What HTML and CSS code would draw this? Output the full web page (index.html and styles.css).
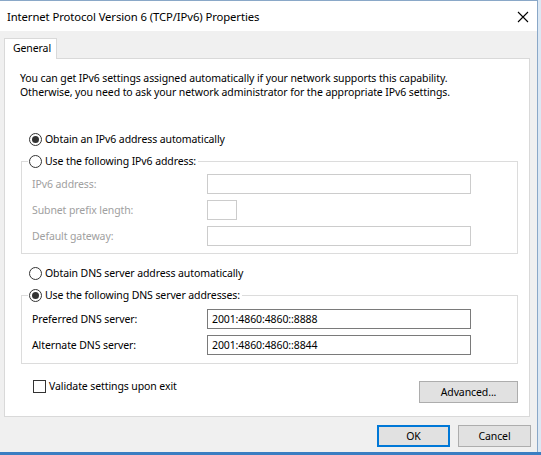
FILE: index.html
```html
<!DOCTYPE html>
<html>
<head>
<meta charset="utf-8">
<link rel="stylesheet" href="styles.css">
</head>
<body>
<div class="window">
  <div class="titlebar">
    <span class="title">Internet Protocol Version 6 (TCP/IPv6) Properties</span>
    <svg class="close" width="12" height="12" viewBox="0 0 12 12"><path d="M1 1 L11 11 M11 1 L1 11" stroke="#000" stroke-width="1.1" fill="none"/></svg>
  </div>
  <div class="client">
    <div class="tabs"><div class="tab">General</div></div>
    <div class="panel">
      <p class="intro">You can get IPv6 settings assigned automatically if your network supports this capability.<br>Otherwise, you need to ask your network administrator for the appropriate IPv6 settings.</p>
      <div class="opt opt-first"><span class="radio checked"></span>Obtain an IPv6 address automatically</div>
      <div class="group group-ip">
        <div class="legend"><span class="radio"></span>Use the following IPv6 address:</div>
        <div class="row disabled first-row"><span class="lbl">IPv6 address:</span><span class="field wide"></span></div>
        <div class="row disabled"><span class="lbl">Subnet prefix length:</span><span class="field short"></span></div>
        <div class="row disabled"><span class="lbl">Default gateway:</span><span class="field wide"></span></div>
      </div>
      <div class="opt opt-dns"><span class="radio"></span>Obtain DNS server address automatically</div>
      <div class="group group-dns">
        <div class="legend"><span class="radio checked"></span>Use the following DNS server addresses:</div>
        <div class="row first-row"><span class="lbl">Preferred DNS server:</span><span class="field wide enabled">2001:4860:4860::8888</span></div>
        <div class="row"><span class="lbl">Alternate DNS server:</span><span class="field wide enabled">2001:4860:4860::8844</span></div>
      </div>
      <div class="footer-row">
        <div class="check"><span class="box"></span>Validate settings upon exit</div>
        <button class="btn adv">Advanced...</button>
      </div>
    </div>
    <div class="actions">
      <button class="btn ok">OK</button>
      <button class="btn cancel">Cancel</button>
    </div>
  </div>
</div>
</body>
</html>
```

FILE: styles.css
```css
* { box-sizing: border-box; }
html, body { margin: 0; padding: 0; }
body {
  width: 541px;
  height: 455px;
  overflow: hidden;
  background: linear-gradient(#dce8f4 452px, #3a7ec2 452px);
  font-family: "Noto Sans", "Open Sans", sans-serif;
  font-size: 10.5px;
  letter-spacing: -0.1px;
  color: #000;
}
.window {
  width: 538px;
  height: 452px;
  border-top: 1px solid #8aa8c8;
  border-right: 1px solid #8aa8c8;
  background: #f0f0f0;
  display: flex;
  flex-direction: column;
}
.titlebar {
  height: 30px;
  background: #fff;
  display: flex;
  align-items: center;
  justify-content: space-between;
  padding: 0 8px 0 7px;
  font-size: 11.3px;
}
.close { display: block; margin-top: 1px; }
.client {
  padding: 7px 6px 0 4px;
  display: flex;
  flex-direction: column;
}
.tabs { display: flex; height: 20px; }
.tab {
  width: 53px;
  height: 21px;
  background: #fff;
  border: 1px solid #d9d9d9;
  border-bottom: none;
  padding-left: 8px;
  line-height: 18px;
  position: relative;
  z-index: 1;
}
.panel {
  width: 526px;
  height: 359px;
  background: #fff;
  border: 1px solid #d9d9d9;
  display: flex;
  flex-direction: column;
}
.intro {
  margin: 0;
  padding: 12px 0 0 15px;
  line-height: 14px;
}
.opt {
  display: flex;
  align-items: center;
  height: 16px;
  padding-left: 24px;
}
.opt-first { margin-top: 32px; }
.opt-dns { margin-top: 11px; }
.radio {
  width: 13px;
  height: 13px;
  border: 1px solid #333;
  border-radius: 50%;
  margin-right: 3px;
  display: flex;
  align-items: center;
  justify-content: center;
  background: #fff;
  flex: none;
}
.radio.checked::after {
  content: "";
  width: 7px;
  height: 7px;
  border-radius: 50%;
  background: #333;
}
.group {
  margin-left: 16px;
  width: 497px;
  border: 1px solid #dcdcdc;
  display: flex;
  flex-direction: column;
  gap: 6px;
}
.group-ip { margin-top: 14px; padding-bottom: 7px; }
.group-dns { margin-top: 14px; padding-bottom: 8px; }
.legend {
  margin-top: -9px;
  margin-left: 6px;
  height: 16px;
  align-self: flex-start;
  display: flex;
  align-items: center;
  background: #fff;
  padding: 0 2px 0 1px;
}
.group-ip .first-row { margin-top: -1px; }
.row {
  display: flex;
  align-items: center;
  height: 20px;
  padding-left: 10px;
}
.lbl { width: 175px; }
.disabled .lbl { color: #a0a0a0; }
.field {
  height: 20px;
  border: 1px solid #cccccc;
  background: #fff;
  display: flex;
  align-items: center;
  padding-left: 4px;
}
.field.wide { width: 264px; }
.field.short { width: 30px; }
.field.enabled { border-color: #7a7a7a; }
.footer-row {
  margin-top: 14px;
  display: flex;
  justify-content: space-between;
  align-items: flex-start;
  padding: 0 11px 0 28px;
}
.check {
  display: flex;
  align-items: center;
  height: 16px;
}
.box {
  width: 13px;
  height: 13px;
  border: 1px solid #333;
  background: #fff;
  margin-right: 3px;
}
.btn {
  font-family: inherit;
  font-size: 10.5px;
  letter-spacing: -0.1px;
  color: #000;
  background: #e1e1e1;
  border: 1px solid #adadad;
  height: 22px;
  padding: 0;
  margin: 0;
}
.adv { width: 99px; margin-top: 3px; }
.actions {
  margin-top: 8px;
  display: flex;
  justify-content: flex-end;
  gap: 8px;
}
.ok, .cancel { width: 73px; }
.ok { border-color: #0078d7; box-shadow: inset 0 0 0 1px #0078d7; }
```
